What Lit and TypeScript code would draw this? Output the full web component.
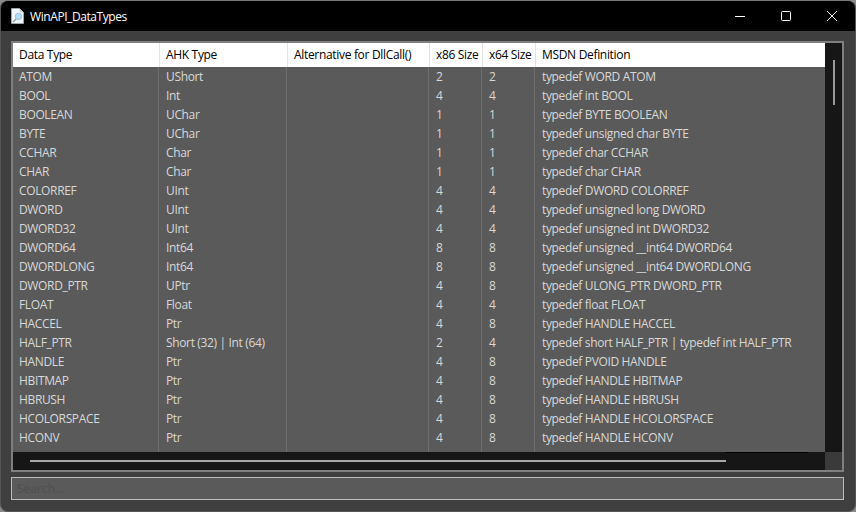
import { LitElement, html, css } from "lit";
import { customElement } from "lit/decorators.js";

const rows: string[][] = [
  ["ATOM", "UShort", "", "2", "2", "typedef WORD ATOM"],
  ["BOOL", "Int", "", "4", "4", "typedef int BOOL"],
  ["BOOLEAN", "UChar", "", "1", "1", "typedef BYTE BOOLEAN"],
  ["BYTE", "UChar", "", "1", "1", "typedef unsigned char BYTE"],
  ["CCHAR", "Char", "", "1", "1", "typedef char CCHAR"],
  ["CHAR", "Char", "", "1", "1", "typedef char CHAR"],
  ["COLORREF", "UInt", "", "4", "4", "typedef DWORD COLORREF"],
  ["DWORD", "UInt", "", "4", "4", "typedef unsigned long DWORD"],
  ["DWORD32", "UInt", "", "4", "4", "typedef unsigned int DWORD32"],
  ["DWORD64", "Int64", "", "8", "8", "typedef unsigned __int64 DWORD64"],
  ["DWORDLONG", "Int64", "", "8", "8", "typedef unsigned __int64 DWORDLONG"],
  ["DWORD_PTR", "UPtr", "", "4", "8", "typedef ULONG_PTR DWORD_PTR"],
  ["FLOAT", "Float", "", "4", "4", "typedef float FLOAT"],
  ["HACCEL", "Ptr", "", "4", "8", "typedef HANDLE HACCEL"],
  ["HALF_PTR", "Short (32) | Int (64)", "", "2", "4", "typedef short HALF_PTR | typedef int HALF_PTR"],
  ["HANDLE", "Ptr", "", "4", "8", "typedef PVOID HANDLE"],
  ["HBITMAP", "Ptr", "", "4", "8", "typedef HANDLE HBITMAP"],
  ["HBRUSH", "Ptr", "", "4", "8", "typedef HANDLE HBRUSH"],
  ["HCOLORSPACE", "Ptr", "", "4", "8", "typedef HANDLE HCOLORSPACE"],
  ["HCONV", "Ptr", "", "4", "8", "typedef HANDLE HCONV"],
  ["", "", "", "", "", ""],
];
const heads = ["Data Type", "AHK Type", "Alternative for DllCall()", "x86 Size", "x64 Size", "MSDN Definition"];

@customElement("app-root")
export class AppRoot extends LitElement {
  static styles = css`
    :host { display: block; width: 856px; height: 512px; background: #8a8a8a; font-family: "Open Sans", "Noto Sans", sans-serif; font-size: 12px; overflow: hidden; }
    .win { width: 856px; height: 512px; box-sizing: border-box; border-radius: 8px; background: #3f3f3f; display: flex; flex-direction: column; overflow: hidden; border: 1px solid #555; border-top-color: #777; }
    .title { height: 30px; background: #000; color: #fff; display: flex; align-items: center; flex: none; }
    .doc { width: 13px; height: 16px; margin: 0 6px 0 10px; }
    .title span { flex: 1; font-size: 12px; letter-spacing: -0.42px; }
    .ctl { width: 46px; height: 30px; display: flex; align-items: center; justify-content: center; }
    .ctl svg { display: block; }
    .body { flex: 1; padding: 10px 11px 12px 10px; display: flex; flex-direction: column; gap: 5px; }
    .list { height: 431px; box-sizing: border-box; border: 2px solid #7f7f7f; display: grid; grid-template-columns: 1fr 17px; grid-template-rows: 1fr 18px; background: #161616; flex: none; }
    .view { overflow: hidden; background: #5a5a5a; }
    .row { display: grid; grid-template-columns: 146px 128px 142px 53px 53px 1fr; height: 19px; line-height: 19px; color: #d8d8d8; }
    .row > div { padding-left: 7px; white-space: nowrap; border-left: 1px solid #6e6e6e; margin-left: -1px; letter-spacing: -0.35px; }
    .row > div:first-child { border-left: 0; margin-left: 0; padding-left: 6px; }
    .head { height: 24px; line-height: 24px; background: #fff; color: #000; }
    .head > div { border-left-color: #e3e3e3; margin-left: 0; padding-left: 6px; letter-spacing: -0.32px; }
    .vbar { background: #161616; padding: 17px 0 0 8px; box-sizing: border-box; }
    .vbar i { display: block; width: 2px; height: 45px; background: #9a9a9a; }
    .hbar { background: #161616; display: flex; align-items: center; padding-left: 17px; position: relative; }
    .hbar i { display: block; width: 696px; height: 2px; background: #a8a8a8; }
    .hbar b { position: absolute; left: 713px; top: 0; width: 82px; height: 1px; background: #000; }
    .corner { background: #3a3a3a; }
    input { display: block; height: 23px; box-sizing: border-box; width: 100%; border: 1px solid #bdbdbd; background: #5a5a5a; padding: 0 5px; font: inherit; color: #d8d8d8; outline: none; flex: none; }
    input::placeholder { color: #4f4f4f; opacity: 1; }
  `;
  render() {
    return html`<div class="win">
      <div class="title">
        <svg class="doc" viewBox="0 0 13 16"><path d="M.5.500h8l4 4v11h-12z" fill="#f2f5f8" stroke="#b9c2ca" stroke-width=".6"/><path d="M8.500.500v4h4z" fill="#c9d3dc"/><circle cx="7.500" cy="8.500" r="3.200" fill="#b5dcf5" stroke="#8fb4d0" stroke-width=".8"/><path d="M5 11l-3 3" stroke="#7f9fb8" stroke-width="1.300"/></svg>
        <span>WinAPI_DataTypes</span>
        <div class="ctl"><svg width="10" height="10" viewBox="0 0 10 10"><path d="M0 5.500h10" stroke="#fff"/></svg></div>
        <div class="ctl"><svg width="10" height="10" viewBox="0 0 10 10"><rect x=".5" y=".5" width="9" height="9" rx="1" fill="none" stroke="#fff"/></svg></div>
        <div class="ctl"><svg width="10" height="10" viewBox="0 0 10 10"><path d="M0 0l10 10M10 0l-10 10" stroke="#fff" fill="none"/></svg></div>
      </div>
      <div class="body">
        <div class="list">
          <div class="view">
            <div class="row head">${heads.map((h) => html`<div>${h}</div>`)}</div>
            ${rows.map((r) => html`<div class="row">${r.map((c) => html`<div>${c}</div>`)}</div>`)}
          </div>
          <div class="vbar"><i></i></div>
          <div class="hbar"><i></i><b></b></div>
          <div class="corner"></div>
        </div>
        <input placeholder="Search..." />
      </div>
    </div>`;
  }
}
